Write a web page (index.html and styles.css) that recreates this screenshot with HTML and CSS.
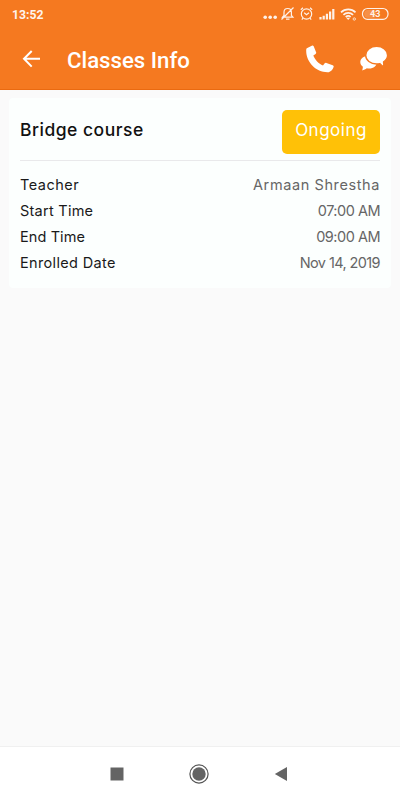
FILE: index.html
```html
<!DOCTYPE html>
<html lang="en">
<head>
    <meta charset="UTF-8">
    <meta name="viewport" content="width=device-width, initial-scale=1.0">
    <title>Classes Info</title>
    <link rel="stylesheet" href="styles.css">
</head>
<body>
    <header class="header">
        <div class="status-bar">
            <span class="clock">13:52</span>
            <svg class="status-icons" width="128" height="16" viewBox="0 0 128 16" fill="none" stroke="#fff" stroke-width="1.2">
                <!-- more -->
                <g fill="#fff" stroke="none">
                    <circle cx="2.2" cy="11.2" r="1.8"/>
                    <circle cx="7.2" cy="11.2" r="1.8"/>
                    <circle cx="12.2" cy="11.2" r="1.8"/>
                </g>
                <!-- muted bell -->
                <path d="M19.5 11.2l1.5-1.700V6.300c0-2.300 1.600-3.800 3.700-3.800s3.700 1.500 3.700 3.800v3.200l1.500 1.700zM23 13.200h3.500M18.500 13.500L30.500 1.500"/>
                <!-- alarm -->
                <circle cx="43.500" cy="8" r="5.200"/>
                <path d="M41.200 6.800l2.300 2 2.500-2M37.800 3.800l2.200-2M49.200 3.800l-2.200-2M40 12.200l-1.200 1.400M47 12.200l1.200 1.400"/>
                <!-- signal -->
                <path stroke-width="2.200" d="M57.500 13.500v-2.500M60.700 13.500V9.700M63.900 13.500V7.800M67.100 13.500V5.500M70.300 13.500V3"/>
                <!-- wifi -->
                <path stroke-width="1.700" d="M78 6.300c4-4 10.500-4 14.500 0M80.400 8.800c2.700-2.600 7-2.600 9.700 0M82.700 11c1.500-1.300 3.600-1.300 5 0"/>
                <path fill="#fff" stroke="none" d="M83.200 11.700h4l-2 2.300z"/>
                <circle cx="91.300" cy="13" r="1.200" stroke-width=".8"/>
                <!-- battery -->
                <rect x="99.500" y="2.500" width="25.500" height="10.800" rx="5"/>
                <rect x="101.200" y="4" width="12" height="7.800" rx="3.500" fill="#fff" fill-opacity=".2" stroke="none"/>
                <text class="battery" x="112.200" y="11.200" text-anchor="middle">43</text>
            </svg>
        </div>
        <div class="toolbar">
            <svg class="back" width="18" height="18" viewBox="0 0 18 18" fill="none" stroke="#fff" stroke-width="2">
                <path d="M9.700 1L2 8.800l7.700 7.800M2 8.800H18"/>
            </svg>
            <h1>Classes Info</h1>
            <svg class="phone" width="28" height="28" viewBox="0 0 28 28" fill="#fff">
                <path d="M1.300 3.100L5.800.7c.7-.4 1.500-.2 1.900.6l2.400 5.900c.3.700.1 1.300-.5 1.700L7.300 10.600c1.600 4.300 5.300 8.200 9.700 10l1.700-2.300c.4-.5 1-.7 1.700-.4l6.300 2.300c.8.300 1.200 1.100.9 1.900-.8 2.300-2.300 4.500-4.800 5.100C10.500 28-.2 17.500.2 5.200c0-.9.300-1.700 1.100-2.100z"/>
            </svg>
            <svg class="chat" width="28" height="24" viewBox="0 0 28 24">
                <path fill="#fff" d="M9 8.800C4 8.800.3 11.500.3 15c0 1.900 1 3.600 2.600 4.800-.1 1.300-.4 2.600-.7 3.700 1.600-.3 3.500-1.200 4.600-2.200.8.200 1.500.3 2.300.3 4.400 0 7.800-2.600 7.800-6.300S13.900 8.800 9 8.800z"/>
                <path fill="#fff" stroke="#f57920" stroke-width="1.400" d="M16.600-.6C10.500-.6 5.700 3.300 5.700 8.200s4.800 8.800 10.900 8.800c1.200 0 2.300-.1 3.300-.4 1.200 1.300 2.700 2.600 4.600 3.300-.8-1.500-1-3.200-.9-5 2.400-1.600 4-4 4-6.700 0-4.900-4.900-8.800-11-8.800z"/>
            </svg>
        </div>
    </header>

    <main class="content">
        <section class="card">
            <div class="card-header">
                <h2>Bridge course</h2>
                <span class="badge">Ongoing</span>
            </div>
            <dl class="details">
                <div class="row"><dt class="teacher">Teacher</dt><dd class="name">Armaan Shrestha</dd></div>
                <div class="row"><dt>Start Time</dt><dd>07:00 AM</dd></div>
                <div class="row"><dt class="end">End Time</dt><dd>09:00 AM</dd></div>
                <div class="row"><dt class="enrolled">Enrolled Date</dt><dd class="date">Nov 14, 2019</dd></div>
            </dl>
        </section>
    </main>

    <nav class="nav-bar">
        <svg width="14" height="14" viewBox="0 0 14 14"><path fill="#646464" d="M.5.500h13v13H.5z"/></svg>
        <svg width="20" height="20" viewBox="0 0 20 20">
            <circle cx="10" cy="10" r="9.100" fill="none" stroke="#555" stroke-width="1.200"/>
            <circle cx="10" cy="10" r="6.700" fill="#646464"/>
        </svg>
        <svg width="14" height="16" viewBox="0 0 14 16"><path fill="#646464" d="M.8 8L13 .9v14.200z"/></svg>
    </nav>
</body>
</html>
```
FILE: styles.css
```css
* {
    box-sizing: border-box;
}

body {
    display: flex;
    flex-direction: column;
    height: 100vh;
    margin: 0;
    background-color: #fafafa;
    font-family: Inter, sans-serif;
}

.header {
    height: 90px;
    background-color: #f57920;
    border-bottom: 1px solid #ea6a10;
    color: #fff;
    font-family: Roboto, sans-serif;
}

.status-bar {
    display: flex;
    justify-content: space-between;
    align-items: center;
    height: 29px;
    padding: 0 9px 0 12px;
}

.clock {
    font-size: 12.2px;
    font-weight: 700;
    opacity: 0.92;
}

.status-icons {
    margin-top: -2px;
    opacity: 0.9;
}

.battery {
    fill: #fff;
    stroke: none;
    font-size: 9px;
    font-weight: 700;
}

.toolbar {
    display: flex;
    align-items: center;
    height: 60px;
    padding: 0 12px 0 22px;
}

.toolbar h1 {
    flex: 1;
    margin: 2px 0 0 27px;
    font-size: 22.2px;
    font-weight: 500;
}

.chat {
    margin-left: 26px;
}

.content {
    flex: 1;
    padding: 8px 9px;
}

.card {
    height: 190px;
    padding: 12px 11px;
    border-radius: 4px;
    background-color: #fcfffe;
}

.card-header {
    display: flex;
    justify-content: space-between;
    height: 51px;
    border-bottom: 1px solid #e9e9eb;
}

.card-header h2 {
    margin: 0;
    font-size: 17.5px;
    font-weight: 500;
    line-height: 40px;
    letter-spacing: 0.5px;
    color: #111;
}

.badge {
    width: 98px;
    height: 44px;
    border-radius: 5px;
    background-color: #ffc107;
    color: #fff;
    font-size: 17px;
    line-height: 41px;
    letter-spacing: 0.5px;
    text-align: center;
}

.details {
    margin: 11px 0 0;
    font-size: 14.5px;
}

.row {
    display: flex;
    justify-content: space-between;
    line-height: 26px;
}

.row dt {
    letter-spacing: 0.25px;
    color: #1a1a1a;
}

.row dd {
    margin: 0;
    letter-spacing: -0.5px;
    color: #666;
}

.row .teacher {
    letter-spacing: 0.5px;
}

.row .end {
    letter-spacing: 0.1px;
}

.row .enrolled {
    letter-spacing: 0.35px;
}

.row .name {
    letter-spacing: 0.6px;
}

.row .date {
    letter-spacing: -0.6px;
}

.nav-bar {
    display: flex;
    justify-content: space-between;
    align-items: center;
    height: 54px;
    padding: 0 112px 0 110px;
    border-top: 1px solid #f0f0f0;
    background-color: #fff;
}
```
